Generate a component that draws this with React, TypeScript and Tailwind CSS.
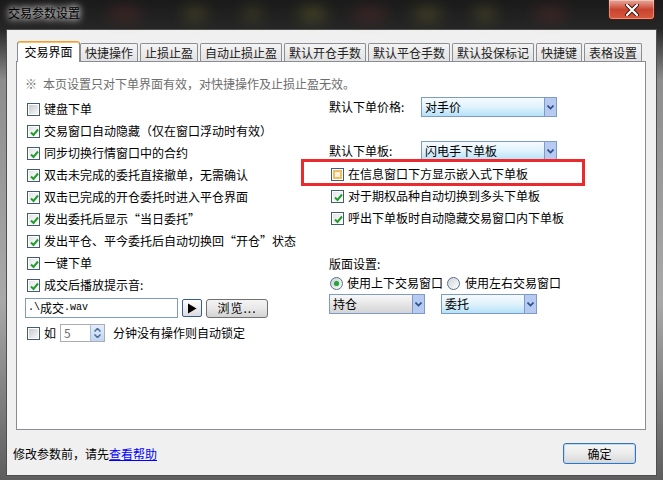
import React from "react";

const tabs = [
  "交易界面",
  "快捷操作",
  "止损止盈",
  "自动止损止盈",
  "默认开仓手数",
  "默认平仓手数",
  "默认投保标记",
  "快捷键",
  "表格设置",
];

// quotes in the original font sit in a full-width cell
function Q({ open }: { open?: boolean }) {
  return (
    <span className={open ? "inline-block w-[12px] text-right" : "inline-block w-[12px] text-left"}>
      {open ? "“" : "”"}
    </span>
  );
}

const leftRows: { label: React.ReactNode; key: string; on: boolean }[] = [
  { key: "a", label: "键盘下单", on: false },
  { key: "b", label: "交易窗口自动隐藏（仅在窗口浮动时有效）", on: true },
  { key: "c", label: "同步切换行情窗口中的合约", on: true },
  { key: "d", label: "双击未完成的委托直接撤单，无需确认", on: true },
  { key: "e", label: "双击已完成的开仓委托时进入平仓界面", on: true },
  {
    key: "f",
    label: (
      <>
        发出委托后显示<Q open />当日委托<Q />
      </>
    ),
    on: true,
  },
  {
    key: "g",
    label: (
      <>
        发出平仓、平今委托后自动切换回<Q open />开仓<Q />状态
      </>
    ),
    on: true,
  },
  { key: "h", label: "一键下单", on: true },
  { key: "i", label: "成交后播放提示音:", on: true },
];

function Check({ on, hot }: { on?: boolean; hot?: boolean }) {
  return (
    <span className="relative flex h-[13px] w-[13px] shrink-0 items-center justify-center border border-[#435b74] bg-white">
      {hot ? (
        <span className="h-[9px] w-[9px] border-2 border-[#f2bd5e] bg-[#fdf2da]" />
      ) : on ? (
        <span className="h-[9px] w-[9px] bg-gradient-to-br from-[#e2e5e9] to-white" />
      ) : (
        <span className="h-[9px] w-[9px] bg-gradient-to-br from-[#c6cad0] to-[#f7f7f7]" />
      )}
      {on && (
        <svg className="absolute left-[1px] top-[1px]" width="11" height="11" viewBox="0 0 11 11">
          <path d="M2 5.5 L4.5 8 L9 2.5" fill="none" stroke="#1f9e2a" strokeWidth="2" />
        </svg>
      )}
    </span>
  );
}

function CheckRow({ label, on, hot }: { label: React.ReactNode; on?: boolean; hot?: boolean }) {
  return (
    <div className="flex h-[22px] items-center gap-[4px]">
      <Check on={on} hot={hot} />
      <span className="whitespace-nowrap">{label}</span>
    </div>
  );
}

function Radio({ on }: { on?: boolean }) {
  return (
    <span className="flex h-[13px] w-[13px] shrink-0 items-center justify-center rounded-full border border-[#56708b] bg-gradient-to-br from-[#cfd3d8] to-white">
      {on && <span className="h-[5px] w-[5px] rounded-full bg-[#27a23a] shadow-[0_0_2px_#7fd08a]" />}
    </span>
  );
}

function Combo({ value, className, gray }: { value: string; className: string; gray?: boolean }) {
  return (
    <div className={"flex h-[20px] border border-[#7d9bc4] " + className}>
      <div
        className={
          gray
            ? "flex-1 bg-gradient-to-b from-[#f8f8f8] to-[#d4d4d4] pl-[3px] leading-[18px]"
            : "flex-1 bg-gradient-to-b from-[#f5fbfe] via-[#e0f2fc] to-[#b5e1f8] pl-[3px] leading-[18px]"
        }
      >
        {value}
      </div>
      <div className="flex w-[12px] items-center justify-center border-l border-[#7d9bc4] bg-[#b6caf2]">
        <svg width="7" height="5" viewBox="0 0 7 5">
          <path d="M0.5 0.5 L3.5 3.5 L6.5 0.5" fill="none" stroke="#2c4d88" strokeWidth="1.6" />
        </svg>
      </div>
    </div>
  );
}

export default function App() {
  return (
    <div className="h-[480px] w-[663px] overflow-hidden bg-[linear-gradient(to_bottom,#1a1a1a_0px,#262626_29px,#8d8d8d_80px,#a9a9a9_300px,#5d5d5d_480px)] font-['Noto_Sans_CJK_SC',sans-serif] text-[12px] leading-[16px] text-black">
      {/* title bar */}
      <div className="relative flex h-[29px] items-start justify-between">
        <span className="absolute left-[110px] top-[10px] h-[8px] w-[30px] rounded-full bg-[#a83a3a] opacity-40 blur-sm" />
        <span className="absolute left-[185px] top-[10px] h-[8px] w-[20px] rounded-full bg-[#b8b23a] opacity-40 blur-sm" />
        <span className="absolute left-[245px] top-[10px] h-[8px] w-[15px] rounded-full bg-[#b8b23a] opacity-40 blur-sm" />
        <span className="absolute left-[300px] top-[10px] h-[8px] w-[25px] rounded-full bg-[#c8c83a] opacity-40 blur-sm" />
        <span className="absolute left-[355px] top-[10px] h-[8px] w-[30px] rounded-full bg-[#a83a3a] opacity-40 blur-sm" />
        <span className="absolute left-[415px] top-[10px] h-[8px] w-[25px] rounded-full bg-[#b8b23a] opacity-40 blur-sm" />
        <span className="absolute left-[475px] top-[10px] h-[8px] w-[20px] rounded-full bg-[#b8b23a] opacity-40 blur-sm" />
        <span className="absolute left-[535px] top-[10px] h-[8px] w-[30px] rounded-full bg-[#a83a3a] opacity-40 blur-sm" />
        <span className="relative pl-[8px] pt-[5px] [text-shadow:0_0_6px_#fff,0_0_10px_#fff]">交易参数设置</span>
        <div className="relative mr-[8px] flex h-[20px] w-[47px] items-center justify-center rounded-b-[4px] border border-t-0 border-[#4a1a12] bg-gradient-to-b from-[#e8a99c] via-[#c8442f] to-[#d85a3c] shadow-[inset_0_0_0_1px_rgba(255,255,255,0.35)]">
          <svg width="14" height="12" viewBox="0 0 14 12">
            <path d="M2 1 L12 11 M12 1 L2 11" stroke="#3a1510" strokeWidth="4" strokeLinecap="round" />
            <path d="M2 1 L12 11 M12 1 L2 11" stroke="#fff" strokeWidth="2.2" strokeLinecap="round" />
          </svg>
        </div>
      </div>

      {/* client area */}
      <div className="mx-[6px] flex h-[447px] flex-col border border-[#4e4e4e] bg-[#f0f0f0]">
        {/* tabs */}
        <div className="ml-[10px] mt-[11px] flex h-[20px] items-end">
          {tabs.map((t, i) =>
            i === 0 ? (
              <div
                key={t}
                className="relative z-10 -mb-[1px] flex h-[21px] w-[63px] justify-center rounded-t-[3px] border border-b-0 border-[#898c95] border-t-[#e9a233] bg-white pt-[2px] shadow-[inset_0_1px_0_#f7c066]"
              >
                {t}
              </div>
            ) : (
              <div
                key={t}
                className={
                  (i === 1 ? "" : "ml-[2px] ") +
                  "flex h-[18px] items-center rounded-t-[2px] border border-b-0 border-[#8c8e94] bg-gradient-to-b from-[#f4f4f4] to-[#e2e2e2] px-[4px] text-[#222]"
                }
              >
                {t}
              </div>
            )
          )}
        </div>

        {/* panel */}
        <div className="ml-[9px] h-[369px] w-[630px] border border-[#898c95] bg-white pl-[10px] pt-[12px]">
          <div className="flex h-[20px] items-center text-[#6d6d6d]">
            <span className="w-[18px] -ml-[2px]">※</span>
            <span>本页设置只对下单界面有效，对快捷操作及止损止盈无效。</span>
          </div>
          <div className="flex">
            {/* left column */}
            <div className="w-[302px] pt-[4px]">
              {leftRows.map((r) => (
                <CheckRow key={r.key} label={r.label} on={r.on} />
              ))}
              <div className="-ml-[2px] mt-[2px] flex h-[20px] items-center">
                <div className="flex h-[20px] w-[153px] items-center border border-[#7f9db9] bg-white pl-[2px]">
                  <span className="font-['Liberation_Mono',monospace] text-[10px]">.\</span>
                  <span>成交</span>
                  <span className="font-['Liberation_Mono',monospace] text-[10px]">.wav</span>
                </div>
                <div className="ml-[4px] flex h-[18px] w-[20px] items-center justify-center rounded-[2px] border border-[#2f5f96] bg-gradient-to-b from-white to-[#dcdcdc]">
                  <svg width="10" height="11" viewBox="0 0 10 11">
                    <path d="M1 0.5 L9.5 5.5 L1 10.5 Z" fill="#000" />
                  </svg>
                </div>
                <div className="ml-[4px] flex h-[19px] w-[62px] items-center justify-center rounded-[3px] border border-[#707070] bg-gradient-to-b from-[#f4f4f4] via-[#e8e8e8] to-[#d2d2d2] tracking-[1px]">
                  浏览...
                </div>
              </div>
              <div className="mt-[6px] flex h-[18px] items-center">
                <Check />
                <span className="ml-[4px]">如</span>
                <div className="ml-[4px] flex h-[18px] w-[45px] border border-[#abadb3] bg-white">
                  <span className="w-[30px] pl-[3px] leading-[16px] text-[#6d6d6d]">5</span>
                  <div className="flex w-[14px] flex-col items-center justify-center gap-[2px] border-l border-[#a9bfd6] bg-gradient-to-b from-[#e4eefa] to-[#c0d6f2]">
                    <svg width="7" height="4" viewBox="0 0 7 4">
                      <path d="M0.5 3.5 L3.5 0.5 L6.5 3.5" fill="none" stroke="#4a6a9a" strokeWidth="1.5" />
                    </svg>
                    <svg width="7" height="4" viewBox="0 0 7 4">
                      <path d="M0.5 0.5 L3.5 3.5 L6.5 0.5" fill="none" stroke="#4a6a9a" strokeWidth="1.5" />
                    </svg>
                  </div>
                </div>
                <span className="ml-[8px]">分钟没有操作则自动锁定</span>
              </div>
            </div>

            {/* right column */}
            <div className="flex flex-col pt-[2px]">
              <div className="flex h-[22px] items-center">
                <span className="w-[92px]">默认下单价格:</span>
                <Combo value="对手价" className="w-[136px]" />
              </div>
              <div className="mt-[22px] flex h-[22px] items-center">
                <span className="w-[92px]">默认下单板:</span>
                <Combo value="闪电手下单板" className="w-[136px]" />
              </div>
              <div className="ml-[2px] mt-[1px]">
                <div className="relative">
                  <div className="absolute -left-[30px] -top-[4px] h-[27px] w-[284px] border-[3px] border-[#ec2a2d]" />
                  <CheckRow label="在信息窗口下方显示嵌入式下单板" hot />
                </div>
                <CheckRow label="对于期权品种自动切换到多头下单板" on />
                <CheckRow label="呼出下单板时自动隐藏交易窗口内下单板" on />
              </div>
              <div className="mt-[25px] flex h-[20px] items-center">版面设置:</div>
              <div className="flex h-[18px] items-center">
                <span className="ml-[1px]">
                  <Radio on />
                </span>
                <span className="ml-[4px]">使用上下交易窗口</span>
                <span className="ml-[4px]">
                  <Radio />
                </span>
                <span className="ml-[5px]">使用左右交易窗口</span>
              </div>
              <div className="mt-[2px] flex gap-[16px]">
                <Combo value="持仓" className="w-[96px]" gray />
                <Combo value="委托" className="w-[96px]" />
              </div>
            </div>
          </div>
        </div>

        {/* bottom bar */}
        <div className="mt-[13px] flex items-center justify-between pl-[6px] pr-[20px]">
          <span>
            修改参数前，请先<span className="text-[#0000ff] underline">查看帮助</span>
          </span>
          <div className="flex h-[21px] w-[73px] items-center justify-center rounded-[3px] border border-[#3b73b4] bg-gradient-to-b from-[#f6f6f6] via-[#ebebeb] to-[#d8d8d8] shadow-[inset_0_0_0_1px_#b8dcf4]">
            确定
          </div>
        </div>
      </div>
    </div>
  );
}
